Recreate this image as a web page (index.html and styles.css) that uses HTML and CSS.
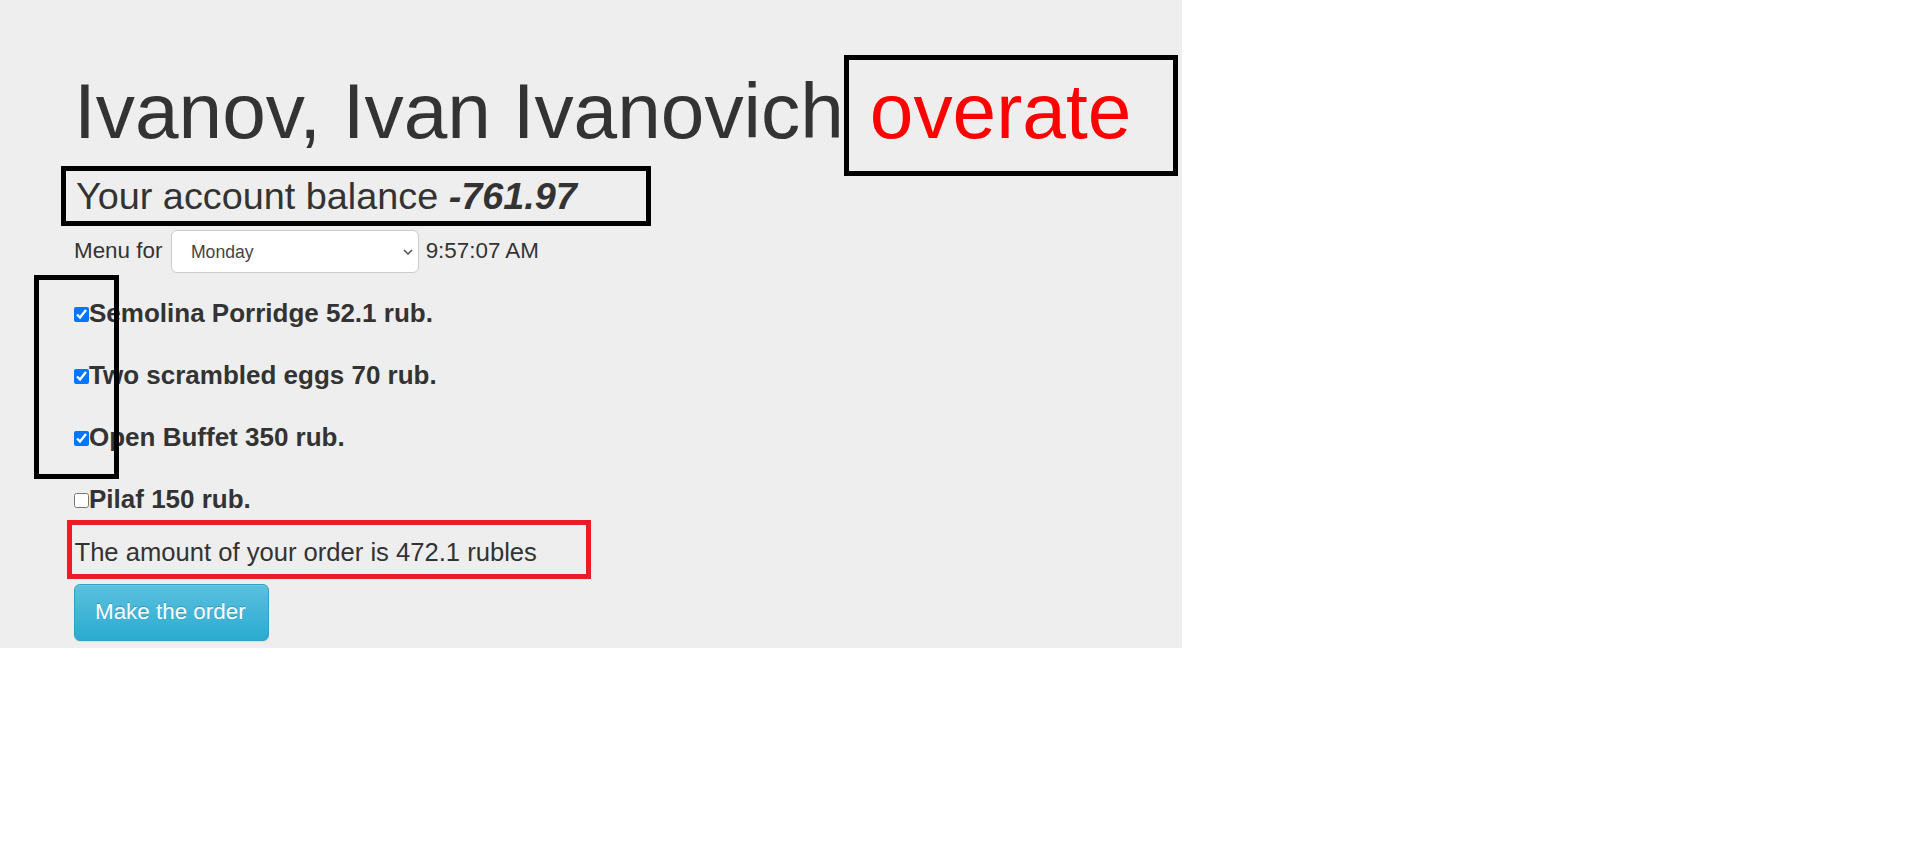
FILE: index.html
```html
<!DOCTYPE html>
<html lang="en">
<head>
<meta charset="utf-8">
<title>Menu</title>
<link rel="stylesheet" href="styles.css">
</head>
<body>
<div class="page">
  <h1 class="name">Ivanov, Ivan Ivanovich<span class="status">overate</span></h1>
  <div class="balance">Your account balance <b><i>-761.97</i></b></div>
  <div class="menu-row">
    <span class="menu-label">Menu for</span>
    <span class="select-wrap">
      <select class="day-select">
        <option>Monday</option>
        <option>Tuesday</option>
        <option>Wednesday</option>
        <option>Thursday</option>
        <option>Friday</option>
      </select>
      <svg class="chev" width="10" height="6" viewBox="0 0 10 6"><path d="M1 1L5 5L9 1" fill="none" stroke="#555" stroke-width="1.6"/></svg>
    </span>
    <span class="time">9:57:07 AM</span>
  </div>
  <div class="items">
    <label class="item"><input type="checkbox" checked>Semolina Porridge 52.1 rub.</label>
    <label class="item"><input type="checkbox" checked>Two scrambled eggs 70 rub.</label>
    <label class="item"><input type="checkbox" checked>Open Buffet 350 rub.</label>
    <label class="item"><input type="checkbox">Pilaf 150 rub.</label>
  </div>
  <div class="amount">The amount of your order is 472.1 rubles</div>
  <button class="btn-order" type="button">Make the order</button>
  <div class="note-box"></div>
</div>
</body>
</html>
```
FILE: styles.css
```css
html, body {
  margin: 0;
  background: #fff;
}
body {
  font-family: "Liberation Sans", Arial, sans-serif;
  color: #333;
}
.page {
  position: relative;
  width: 1182px;
  height: 648px;
  box-sizing: border-box;
  background: #eee;
  padding: 68px 0 0 74px;
}
.name {
  margin: 0;
  font-size: 78.4px;
  font-weight: normal;
  line-height: 87px;
  white-space: nowrap;
}
.status {
  color: #f00;
  border: 5px solid #000;
  padding: 7px 42px 16px 21px;
}
.balance {
  margin: 11px 0 0 -13px;
  width: 590px;
  box-sizing: border-box;
  border: 5px solid #000;
  padding-left: 10px;
  font-size: 37.8px;
  line-height: 50px;
  white-space: nowrap;
}
.menu-row {
  display: flex;
  align-items: baseline;
  margin-top: 4px;
  font-size: 22.4px;
}
.select-wrap {
  position: relative;
  display: inline-block;
  margin: 0 6.7px 0 8.6px;
  line-height: normal;
}
.day-select {
  -webkit-appearance: none;
  appearance: none;
  width: 248px;
  height: 43px;
  box-sizing: border-box;
  border: 1px solid #ccc;
  border-radius: 6px;
  background: #fff;
  padding: 0 0 0 19px;
  margin: 0;
  font-family: "Liberation Sans", Arial, sans-serif;
  font-size: 17.6px;
  color: #444;
  vertical-align: baseline;
}
.chev {
  position: absolute;
  right: 6px;
  top: 50%;
  margin-top: -3px;
  pointer-events: none;
}
.items {
  margin-top: 21.8px;
  display: flex;
  flex-direction: column;
  gap: 26.2px;
  font-size: 26px;
  font-weight: bold;
  line-height: 36px;
}
.item {
  display: block;
}
.item input {
  margin: 0;
  width: 15px;
  height: 15px;
  vertical-align: baseline;
}
.amount {
  margin: 2.6px 0 0 -7px;
  width: 524px;
  box-sizing: border-box;
  border: 5px solid #ed1c24;
  padding: 6px 0 0 2.5px;
  font-size: 25.6px;
  line-height: 43px;
  white-space: nowrap;
}
.btn-order {
  display: block;
  margin: 5px 0 0 0;
  width: 195px;
  height: 57px;
  box-sizing: border-box;
  border: 1px solid #28a4c9;
  border-radius: 6px;
  background: linear-gradient(to bottom, #5bc0de 0%, #2aabd2 100%);
  box-shadow: inset 0 1px 0 rgba(255,255,255,.15), 0 1px 1px rgba(0,0,0,.075);
  color: #fff;
  font-family: "Liberation Sans", Arial, sans-serif;
  font-size: 22.4px;
  text-align: left;
  padding: 0 0 0 20px;
  text-shadow: 0 -1px 0 rgba(0,0,0,.2);
}
.note-box {
  position: absolute;
  left: 34px;
  top: 275px;
  width: 85px;
  height: 204px;
  box-sizing: border-box;
  border: 5px solid #000;
}
```
